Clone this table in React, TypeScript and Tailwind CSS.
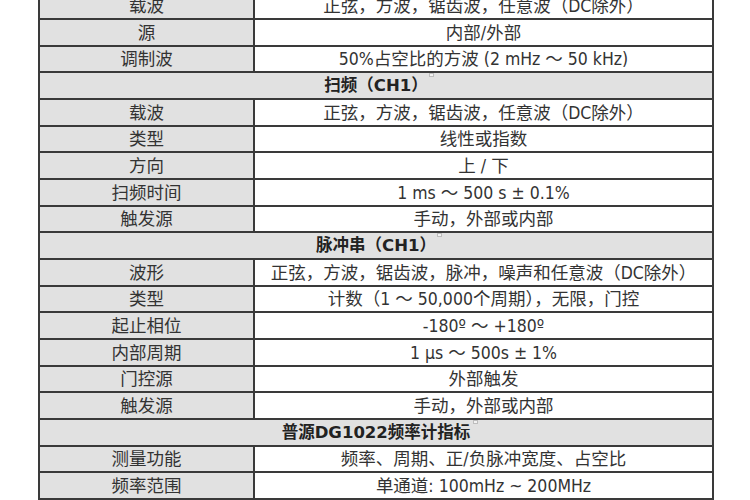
import React from 'react';

type Row = { label?: string; value: string; header?: boolean; mark?: string };

const ROWS: Row[] = [
  { label: '载波', value: '正弦，方波，锯齿波，任意波（DC除外）' },
  { label: '源', value: '内部/外部' },
  { label: '调制波', value: '50%占空比的方波 (2 mHz ～ 50 kHz)' },
  { header: true, value: '扫频（CH1）', mark: 'left-[389px]' },
  { label: '载波', value: '正弦，方波，锯齿波，任意波（DC除外）' },
  { label: '类型', value: '线性或指数' },
  { label: '方向', value: '上 / 下' },
  { label: '扫频时间', value: '1 ms ～ 500 s ± 0.1%' },
  { label: '触发源', value: '手动，外部或内部' },
  { header: true, value: '脉冲串（CH1）', mark: 'left-[397px]' },
  { label: '波形', value: '正弦，方波，锯齿波，脉冲，噪声和任意波（DC除外）' },
  { label: '类型', value: '计数（1 ～ 50,000个周期），无限，门控' },
  { label: '起止相位', value: '-180º ～ +180º' },
  { label: '内部周期', value: '1 μs ～ 500s ± 1%' },
  { label: '门控源', value: '外部触发' },
  { label: '触发源', value: '手动，外部或内部' },
  { header: true, value: '普源DG1022频率计指标', mark: 'left-[433px]' },
  { label: '测量功能', value: '频率、周期、正/负脉冲宽度、占空比' },
  { label: '频率范围', value: '单通道: 100mHz ~ 200MHz' },
];

const App: React.FC = () => {
  return (
    <div
      className="w-[750px] h-[500px] overflow-hidden bg-white text-[#333] text-[17.5px] leading-[20px]"
      style={{ fontFamily: '"DejaVu Sans Condensed", "Noto Sans CJK SC", sans-serif' }}
    >
      <div className="ml-[38px] w-[676px] -mt-[7px] border-x-2 border-[#3a3a3a] flex flex-col">
        {ROWS.map((row, i) => {
          const h = i % 3 === 2 ? 'h-[26px]' : 'h-[27px]';
          if (row.header) {
            return (
              <div
                key={i}
                className={`${h} relative overflow-hidden border-b-2 border-[#3a3a3a] bg-[#e1e1e1] flex items-center justify-center font-bold text-[16.5px] text-[#222]`}
                style={{ fontFamily: '"DejaVu Sans", "Noto Sans CJK SC", sans-serif' }}
              >
                {row.value}
                <span className={`absolute top-0 ${row.mark} w-[5px] h-[4px] border border-[#bdbdbd] bg-[#f2f2f2]`} />
              </div>
            );
          }
          return (
            <div
              key={i}
              className={`${h} overflow-hidden border-b-2 border-[#3a3a3a] grid grid-cols-[215px_1fr] grid-rows-[100%]`}
            >
              <div className="min-h-0 bg-[#e1e1e1] border-r-2 border-[#3a3a3a] flex items-center justify-center">
                {row.label}
              </div>
              <div className="min-h-0 bg-white flex items-center justify-center">{row.value}</div>
            </div>
          );
        })}
      </div>
    </div>
  );
};

export default App;
